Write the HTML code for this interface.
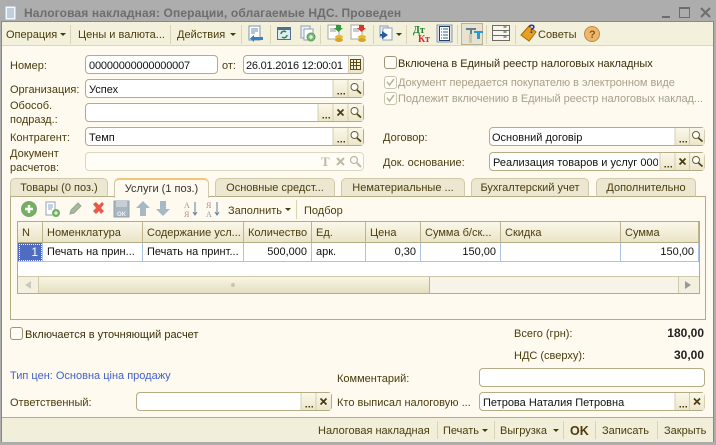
<!DOCTYPE html>
<html><head><meta charset="utf-8"><style>
html,body{margin:0;padding:0;background:#a9a9a9}
#w{position:relative;width:716px;height:445px;overflow:hidden;background:#adadad;font:11px "Liberation Sans",sans-serif;color:#4a3c0c}
#w div,#w span.a,#w svg{position:absolute}
.t{position:absolute;white-space:nowrap;line-height:14px;height:14px;margin-top:1px}
.b{color:#000}
.f{box-sizing:border-box;background:#fff;border:1px solid #b5ab84;border-radius:4px;height:19px}
.btn{box-sizing:border-box;background:linear-gradient(#fbf8ea,#ebe6cb);border-left:1px solid #d4ceb0;top:0;height:17px;width:15px;text-align:center;line-height:17px;color:#4a3c0c}
.sep{width:1px;background:#d9d4b6}
.ar{width:0;height:0;border:3px solid transparent;border-top:3px solid #443a10;border-bottom:0}
.tab{box-sizing:border-box;top:178px;height:19px;background:#ece7d0;border:1px solid #cfc9a9;border-bottom:1px solid #b5ab84;border-radius:5px 5px 0 0;text-align:center;line-height:19px;white-space:nowrap;color:#4a3c0c}
.th{box-sizing:border-box;top:222px;height:21px;background:linear-gradient(#fbf8ea,#eae4c7);border-right:1px solid #bdb48f;border-bottom:1px solid #b5ab84;padding-left:4px;line-height:22px;white-space:nowrap;color:#4a3c0c}
.td{box-sizing:border-box;top:243px;height:19px;background:#fff;border-right:1px solid #a9c4e6;border-bottom:1px solid #a9c4e6;line-height:18px;padding:0 4px;color:#111;white-space:nowrap}
.r{text-align:right}
.cb{box-sizing:border-box;width:13px;height:13px;background:#fffdf6;border:1px solid #9d9575;border-radius:3px}
.dis{color:#a8a08a;letter-spacing:-.04px}
</style></head><body><div id="w">

<!-- title -->
<svg style="left:4px;top:5px" width="14" height="16"><rect x="1" y="1" width="11" height="14" fill="#f4f7fb" stroke="#9fb0c4"/><path d="M3 4h7M3 6h7M3 8h7M3 10h7M3 12h7" stroke="#8ea3bb"/></svg>
<span class="t" style="left:24px;top:5px;font-weight:bold;font-size:12px;letter-spacing:.13px;color:#6d6d6d">Налоговая накладная: Операции, облагаемые НДС. Проведен</span>
<svg style="left:660px;top:5px" width="54" height="14"><path d="M2 12h8" stroke="#6d6d6d" stroke-width="2"/><rect x="19.500" y="2.500" width="10" height="10" fill="none" stroke="#6d6d6d" stroke-width="1"/><path d="M19.500 3h10" stroke="#6d6d6d" stroke-width="2"/><path d="M41 3l9 9M50 3l-9 9" stroke="#6d6d6d" stroke-width="2"/></svg>

<!-- body -->
<div style="left:1px;top:21px;width:713px;height:421px;background:#fefaef;border:1px solid #8b8b6f;box-sizing:border-box"></div>

<!-- toolbar -->
<div style="left:2px;top:22px;width:711px;height:24px;background:#f3f0dc;border-bottom:1px solid #dcd7bb;box-sizing:border-box"></div>
<span class="t" style="left:6px;top:27px">Операция</span><div class="ar" style="left:60px;top:33px"></div>
<div class="sep" style="left:70px;top:25px;height:19px"></div>
<span class="t" style="left:78px;top:27px">Цены и валюта...</span>
<div class="sep" style="left:170px;top:25px;height:19px"></div>
<span class="t" style="left:177px;top:27px">Действия</span><div class="ar" style="left:230px;top:33px"></div>
<div class="sep" style="left:241px;top:25px;height:19px"></div>
<div class="sep" style="left:270px;top:25px;height:19px"></div>
<div class="sep" style="left:320px;top:25px;height:19px"></div>
<div class="sep" style="left:373px;top:25px;height:19px"></div>
<div class="sep" style="left:406px;top:25px;height:19px"></div>
<div class="sep" style="left:457px;top:25px;height:19px"></div>
<div class="sep" style="left:486px;top:25px;height:19px"></div>
<div class="sep" style="left:515px;top:25px;height:19px"></div>
<div style="left:461px;top:23px;width:22px;height:22px;box-sizing:border-box;background:#e7e3d0;border:1px solid #b9b294"></div>

<svg style="left:0;top:22px" width="716" height="24">
<!-- doc arrow -->
<rect x="249" y="4" width="11" height="14" fill="#fff" stroke="#7d93b0"/><path d="M251 7h7M251 9h7M251 11h4" stroke="#6b88ad"/><path d="M263 15h-9v-2l-4 3.500 4 3.500v-2h9z" fill="#3d7fc0"/>
<!-- refresh window -->
<rect x="277.500" y="5.500" width="13" height="12" fill="#dfeaf2" stroke="#50708f"/><rect x="278" y="6" width="12" height="2" fill="#50708f"/><path d="M281 12a3 3 0 0 1 5-2M287 13a3 3 0 0 1-5 2" stroke="#2e8b3a" stroke-width="1.500" fill="none"/>
<!-- docs plus -->
<rect x="301" y="4" width="9" height="12" fill="#eef2f7" stroke="#8ea0b8"/><rect x="304" y="7" width="9" height="11" fill="#fff" stroke="#8ea0b8"/><circle cx="311" cy="15" r="4" fill="#7fb87a" stroke="#5a9a55"/><path d="M309 15h4M311 13v4" stroke="#fff"/>
<!-- doc coins green -->
<rect x="328" y="3" width="11" height="14" fill="#fff" stroke="#a8a8a0"/><path d="M330 7h6M330 9h6" stroke="#999"/><path d="M336 3h5v3h2l-4.500 4-4.500-4h2z" fill="#2f9a3a"/><ellipse cx="339" cy="15" rx="4" ry="2" fill="#e8b830"/><ellipse cx="339" cy="18" rx="4" ry="2" fill="#d9a520"/>
<!-- doc coins red -->
<rect x="351" y="3" width="11" height="14" fill="#fff" stroke="#a8a8a0"/><path d="M353 7h6M353 9h6" stroke="#999"/><path d="M359 3h5v3h2l-4.500 4-4.500-4h2z" fill="#d43a2a"/><ellipse cx="362" cy="15" rx="4" ry="2" fill="#e8b830"/><ellipse cx="362" cy="18" rx="4" ry="2" fill="#d9a520"/>
<!-- docs arrow -->
<rect x="380" y="4" width="8" height="11" fill="#e8eef5" stroke="#8ea0b8"/><rect x="383" y="6" width="9" height="12" fill="#fff" stroke="#8ea0b8"/><path d="M382 9v3h-2v2h2v3l6-4z" fill="#1f5f9f"/>
<path d="M396 11h6l-3 3z" fill="#443a10"/>
<!-- Dt Kt -->
<text x="413" y="11" font-family="Liberation Serif" font-weight="bold" font-size="10" fill="#1d7d26">Дт</text>
<text x="418" y="20" font-family="Liberation Serif" font-weight="bold" font-size="10" fill="#e0262a">Кт</text>
<!-- list doc -->
<rect x="437" y="3" width="15" height="17" fill="#dfe4ea" stroke="#8a97a6"/><rect x="439.500" y="4.500" width="10" height="14" fill="#fff" stroke="#1f3f6f"/><path d="M441 7h1M441 10h1M441 13h1M441 16h1M443 7h5M443 10h5M443 13h5M443 16h5" stroke="#2a5c8f"/>
<!-- T T -->
<path d="M466 6h10v2h-4v12h-2v-12h-4z" fill="#5f7f8f"/><path d="M474 9h9v2h-3v6h-3v-6h-3z" fill="#2a9ad4"/><rect x="469" y="12" width="3" height="9" fill="#c8c6b4"/>
<!-- grid -->
<rect x="492.500" y="3.500" width="17" height="5" fill="#f7f6ee" stroke="#6c6c64"/><rect x="492.500" y="8.500" width="17" height="5" fill="#f7f6ee" stroke="#6c6c64"/><rect x="492.500" y="13.500" width="17" height="5" fill="#f7f6ee" stroke="#6c6c64"/><path d="M503.500 5h3M503.500 10h3M503.500 15h3" stroke="#333"/>
<!-- sovety -->
<path d="M521 13l8-9 7 6-7 9z" fill="#e8a020" stroke="#a86a10"/><text x="528" y="11" font-family="Liberation Sans" font-weight="bold" font-size="12" fill="#2030b0">?</text>
<!-- help -->
<circle cx="592" cy="12" r="7.500" fill="#eeb86a" stroke="#b98a50"/><text x="589" y="16" font-family="Liberation Sans" font-weight="bold" font-size="11" fill="#8a5a20">?</text>
</svg>
<span class="t" style="left:538px;top:27px">Советы</span>

<!-- left labels -->
<span class="t" style="left:10px;top:58px">Номер:</span>
<span class="t" style="left:222px;top:58px">от:</span>
<span class="t" style="left:10px;top:82px">Организация:</span>
<span class="t" style="left:10px;top:98px">Обособ.</span>
<span class="t" style="left:10px;top:112px">подразд.:</span>
<span class="t" style="left:10px;top:130px">Контрагент:</span>
<span class="t" style="left:10px;top:146px">Документ</span>
<span class="t" style="left:10px;top:160px">расчетов:</span>

<!-- fields left -->
<div class="f" style="left:85px;top:55px;width:133px"><span class="t" style="left:3px;top:2px;color:#111;letter-spacing:-.18px">00000000000000007</span></div>
<div class="f" style="left:243px;top:55px;width:121px"><span class="t" style="left:2px;top:2px;color:#111;letter-spacing:-.22px">26.01.2016 12:00:01</span><div class="btn" style="right:0;border-radius:0 3px 3px 0"></div>
<svg style="right:2px;top:3px" width="11" height="11"><rect x="0.500" y="0.500" width="10" height="10" fill="none" stroke="#5a4c18"/><path d="M0 3.500h11M0 6.500h11M3.500 0v11M6.500 0v11" stroke="#5a4c18"/></svg></div>

<div class="f" style="left:85px;top:79px;width:279px"><span class="t" style="left:3px;top:2px;color:#111">Успех</span></div>
<div class="f" style="left:85px;top:103px;width:279px"></div>
<div class="f" style="left:85px;top:127px;width:279px"><span class="t" style="left:3px;top:2px;color:#111">Темп</span></div>
<div class="f" style="left:85px;top:152px;width:279px;background:#fffdf6;border-color:#dcd7c2"></div>

<!-- right block -->
<div class="cb" style="left:384px;top:56px"></div>
<span class="t" style="left:398px;top:56px;color:#3a2f08;letter-spacing:-.04px">Включена в Единый реестр налоговых накладных</span>
<div class="cb" style="left:384px;top:76px;border-color:#c9c4ad"></div>
<span class="t dis" style="left:398px;top:75px">Документ передается покупателю в электронном виде</span>
<div class="cb" style="left:384px;top:92px;border-color:#c9c4ad"></div>
<span class="t dis" style="left:398px;top:91px">Подлежит включению в Единый реестр налоговых наклад...</span>
<svg style="left:384px;top:76px" width="13" height="30"><path d="M3 6l2.500 3L10 3M3 22l2.500 3L10 19" fill="none" stroke="#b8b49e" stroke-width="1.500"/></svg>

<span class="t" style="left:383px;top:130px">Договор:</span>
<div class="f" style="left:489px;top:127px;width:216px"><span class="t" style="left:2px;top:2px;color:#111">Основний договір</span></div>
<span class="t" style="left:383px;top:155px">Док. основание:</span>
<div class="f" style="left:489px;top:152px;width:216px;overflow:hidden"><span class="t" style="left:3px;top:2px;color:#111;width:165px;overflow:hidden">Реализация товаров и услуг 000012</span></div>

<!-- buttons drawn as overlay -->
<div class="f" style="left:479px;top:368px;width:226px"></div>
<span class="t" style="left:337px;top:371px">Комментарий:</span>
<span class="t" style="left:337px;top:395px">Кто выписал налоговую ...</span>
<div class="f" style="left:479px;top:392px;width:226px"><span class="t" style="left:3px;top:2px;color:#111">Петрова Наталия Петровна</span></div>
<span class="t" style="left:10px;top:395px">Ответственный:</span>
<div class="f" style="left:136px;top:392px;width:196px"></div>

<svg style="left:0;top:0" width="716" height="445" font-family="Liberation Sans">
<defs>
<linearGradient id="g" x1="0" y1="0" x2="0" y2="1"><stop offset="0" stop-color="#fbf8ea"/><stop offset="1" stop-color="#ebe6cb"/></linearGradient>
<g id="dots"><rect x="-0.500" y="0" width="15" height="17" fill="url(#g)" stroke="none"/><path d="M-0.500 0v17" stroke="#d4ceb0"/><path d="M4 13h1.500v1.500H4zM7 13h1.500v1.500H7zM10 13h1.500v1.500H10z" fill="#4a3c0c"/></g>
<g id="x"><rect x="0" y="0" width="15" height="17" fill="url(#g)"/><path d="M0 0v17" stroke="#d4ceb0"/><path d="M4.500 5.500l6 6M10.500 5.500l-6 6" stroke="#4a3c0c" stroke-width="1.700"/></g>
<g id="s"><rect x="0" y="0" width="15" height="17" fill="url(#g)"/><path d="M0 0v17" stroke="#d4ceb0"/><circle cx="6.500" cy="7" r="3.500" fill="#fff" stroke="#6a5c2c" stroke-width="1"/><path d="M9 10l4 3.500" stroke="#4a3c0c" stroke-width="1.600"/></g>
</defs>
<use href="#dots" x="333.500" y="80"/><use href="#s" x="348" y="80"/>
<use href="#dots" x="318.500" y="104"/><use href="#x" x="333" y="104"/><use href="#s" x="348" y="104"/>
<use href="#dots" x="333.500" y="128"/><use href="#s" x="348" y="128"/>
<g opacity=".35"><text x="321" y="166" font-family="Liberation Serif" font-weight="bold" font-size="13" fill="#4a3c0c">T</text><path d="M337 158l7 7M344 158l-7 7" stroke="#4a3c0c" stroke-width="2"/><circle cx="354" cy="160" r="3.500" fill="none" stroke="#4a3c0c" stroke-width="1.300"/><path d="M357 163l4 4" stroke="#4a3c0c" stroke-width="2"/></g>
<use href="#dots" x="675.500" y="128"/><use href="#s" x="689.500" y="128"/>
<use href="#dots" x="660.500" y="153"/><use href="#x" x="675" y="153"/><use href="#s" x="689.500" y="153"/>
<use href="#dots" x="301.500" y="393"/><use href="#x" x="316" y="393"/>
<use href="#dots" x="675.500" y="393"/><use href="#x" x="689.500" y="393"/>
</svg>

<!-- tabs -->
<div style="left:10px;top:196px;width:696px;height:124px;box-sizing:border-box;border:1px solid #b5ab84;background:#fefaef"></div>
<div class="tab" style="left:10px;width:98px">Товары (0 поз.)</div>
<div class="tab" style="left:114px;width:95px;top:178px;height:20px;background:#fefaef;border-top:2px solid #f0c77a;border-bottom:0;line-height:18px;color:#333">Услуги (1 поз.)</div>
<div class="tab" style="left:215px;width:120px">Основные средст...</div>
<div class="tab" style="left:341px;width:124px">Нематериальные ...</div>
<div class="tab" style="left:471px;width:118px">Бухгалтерский учет</div>
<div class="tab" style="left:596px;width:100px">Дополнительно</div>

<!-- table toolbar -->
<svg style="left:0;top:198px" width="300" height="24">
<circle cx="29" cy="11" r="7.500" fill="#6fb35f" stroke="#8a9a80"/><path d="M25 11h8M29 7v8" stroke="#fff" stroke-width="2.500"/>
<rect x="46" y="4" width="9" height="13" fill="#fff" stroke="#93a3b8"/><path d="M48 7h5M48 9h5M48 11h4" stroke="#8ea3bb"/><circle cx="56" cy="15" r="4" fill="#6fb35f"/><path d="M54 15h4M56 13v4" stroke="#fff"/>
<path d="M70 16l1-4 7-7 3 3-7 7z" fill="#a8b79e" stroke="#98a88e"/>
<path d="M93 6l3-2 3 3 3-3 2 2-3 4 3 3-3 3-2-3-3 3-3-3 3-3z" fill="#e95a45"/>
<rect x="114" y="3" width="15" height="16" fill="#a8b5bf" stroke="#93a1ac"/><rect x="116" y="3" width="11" height="6" fill="#c7cfd5"/><text x="117" y="18" font-size="6" font-weight="bold" fill="#ecefef">OK</text>
<path d="M143 3l7 7h-4v8h-6v-8h-4z" fill="#a6bac5"/>
<path d="M163 18l7-7h-4v-8h-6v8h-4z" fill="#a6bac5"/>
<text x="184" y="10" font-size="8" font-family="Liberation Serif" fill="#8a9aa8">А</text><text x="184" y="19" font-size="8" font-family="Liberation Serif" fill="#b08a80">Я</text><path d="M195 4v13M193 14l2 3 2-3" stroke="#5f7f9f" fill="none"/>
<text x="206" y="10" font-size="8" font-family="Liberation Serif" fill="#b08a80">Я</text><text x="206" y="19" font-size="8" font-family="Liberation Serif" fill="#8a9aa8">А</text><path d="M217 4v13M215 14l2 3 2-3" stroke="#5f7f9f" fill="none"/>
</svg>
<span class="t" style="left:228px;top:203px">Заполнить</span><div class="ar" style="left:285px;top:208px"></div>
<div class="sep" style="left:296px;top:200px;height:19px"></div>
<span class="t" style="left:304px;top:203px">Подбор</span>

<!-- table -->
<div style="left:17px;top:221px;width:683px;height:73px;box-sizing:border-box;border:1px solid #b5ab84;background:#fff"></div>
<div class="th" style="left:18px;width:25px">N</div>
<div class="th" style="left:43px;width:100px">Номенклатура</div>
<div class="th" style="left:143px;width:101px">Содержание усл...</div>
<div class="th" style="left:244px;width:68px">Количество</div>
<div class="th" style="left:312px;width:54px">Ед.</div>
<div class="th" style="left:366px;width:55px">Цена</div>
<div class="th" style="left:421px;width:80px">Сумма б/ск...</div>
<div class="th" style="left:501px;width:120px">Скидка</div>
<div class="th" style="left:621px;width:78px">Сумма</div>
<div class="td r" style="left:18px;width:25px;background:#4f6cc0;color:#fff;outline:1px dotted #fff;outline-offset:-2px;font-size:12px">1</div>
<div class="td" style="left:43px;width:100px">Печать на прин...</div>
<div class="td" style="left:143px;width:101px">Печать на принт...</div>
<div class="td r" style="left:244px;width:68px">500,000</div>
<div class="td" style="left:312px;width:54px">арк.</div>
<div class="td r" style="left:366px;width:55px">0,30</div>
<div class="td r" style="left:421px;width:80px">150,00</div>
<div class="td r" style="left:501px;width:120px"></div>
<div class="td r" style="left:621px;width:78px">150,00</div>

<!-- scrollbar -->
<div style="left:18px;top:276px;width:681px;height:17px;background:#f6f4e9;border-top:1px solid #cfc9a9;box-sizing:border-box"></div>
<div style="left:18px;top:277px;width:21px;height:16px;background:#f3f0e0;border-right:1px solid #cfc9a9;box-sizing:border-box"></div>
<div style="left:39px;top:277px;width:391px;height:16px;background:linear-gradient(#f8f5e4,#e5dfc0);border-right:1px solid #bdb48f;box-sizing:border-box"></div>
<div style="left:678px;top:277px;width:21px;height:16px;background:#f3f0e0;border-left:1px solid #cfc9a9;box-sizing:border-box"></div>
<svg style="left:0;top:277px" width="716" height="16"><path d="M25 8l6-4v8z" fill="#c9c9c0"/><path d="M685 4l6 4-6 4z" fill="#9a9a90"/><circle cx="233" cy="8" r="2" fill="#c9c4aa"/></svg>

<!-- bottom -->
<div class="cb" style="left:10px;top:327px"></div>
<span class="t" style="left:25px;top:327px;color:#3a2f08">Включается в уточняющий расчет</span>
<span class="t" style="left:514px;top:326px">Всего (грн):</span>
<span class="t" style="right:12px;top:325px;font-weight:bold;color:#222;font-size:12px">180,00</span>
<span class="t" style="left:514px;top:348px">НДС (сверху):</span>
<span class="t" style="right:12px;top:347px;font-weight:bold;color:#222;font-size:12px">30,00</span>
<span class="t" style="left:10px;top:368px;color:#4261c8">Тип цен: Основна ціна продажу</span>

<!-- footer -->
<div style="left:2px;top:417px;width:711px;height:25px;background:#f1eeda;border-top:1px solid #b5ab84;box-sizing:border-box"></div>
<span class="t" style="left:318px;top:423px">Налоговая накладная</span>
<div class="sep" style="left:437px;top:421px;height:18px"></div>
<span class="t" style="left:443px;top:423px">Печать</span><div class="ar" style="left:482px;top:429px"></div>
<div class="sep" style="left:494px;top:421px;height:18px"></div>
<span class="t" style="left:500px;top:423px">Выгрузка</span><div class="ar" style="left:553px;top:429px"></div>
<div class="sep" style="left:563px;top:421px;height:18px"></div>
<span class="t" style="left:570px;top:423px;font-weight:bold;font-size:12.500px">OK</span>
<div class="sep" style="left:595px;top:421px;height:18px"></div>
<span class="t" style="left:602px;top:423px">Записать</span>
<div class="sep" style="left:657px;top:421px;height:18px"></div>
<span class="t" style="left:664px;top:423px">Закрыть</span>
</div></body></html>
